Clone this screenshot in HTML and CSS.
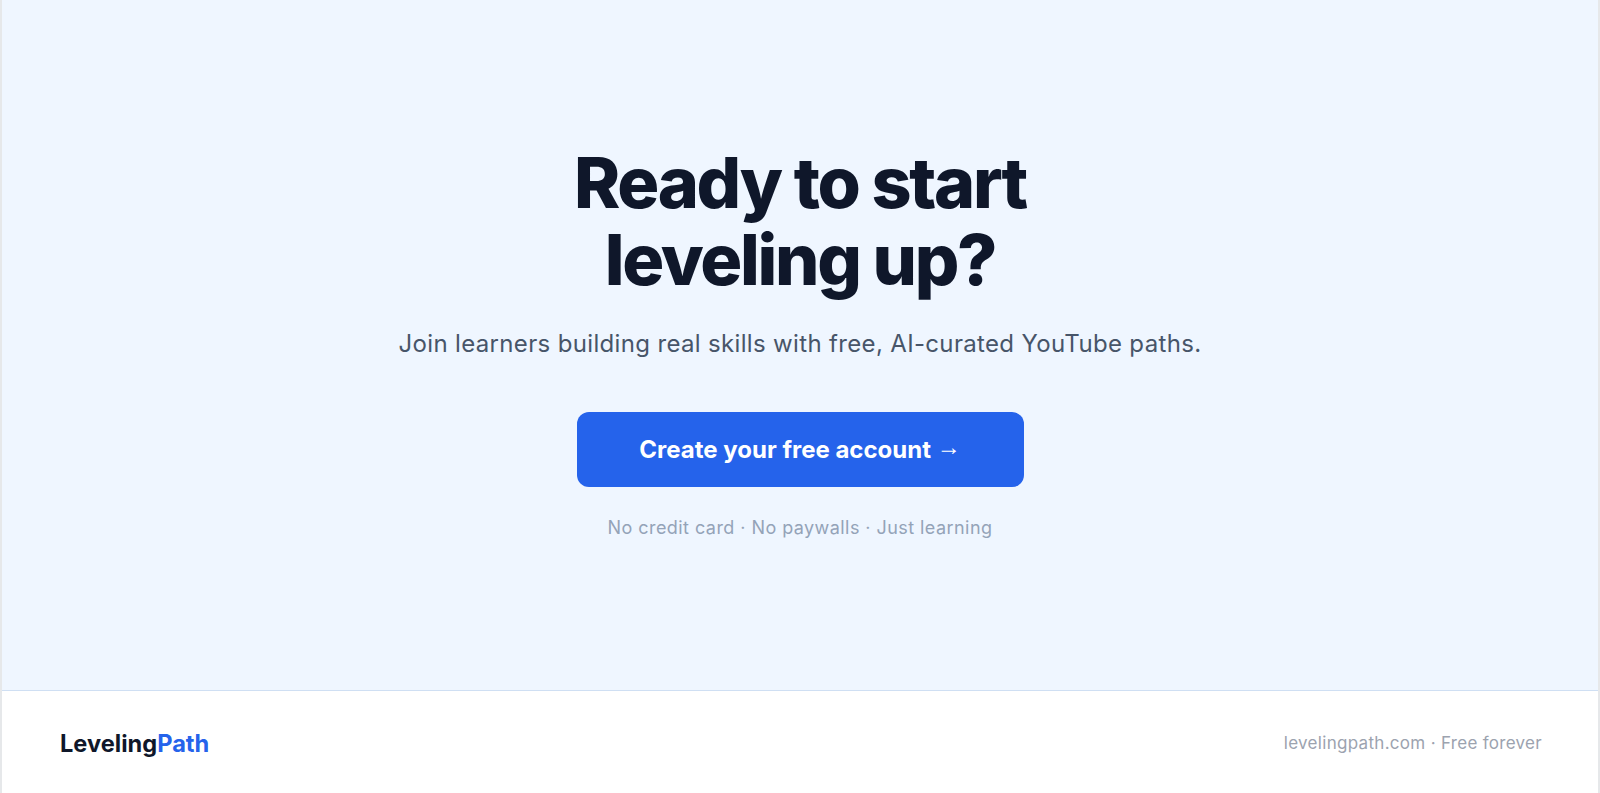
FILE: index.html
```html
<!DOCTYPE html>
<html lang="en">
<head>
    <meta charset="UTF-8">
    <meta name="viewport" content="width=device-width, initial-scale=1.0">
    <title>LevelingPath - Get started</title>
    <link rel="stylesheet" href="styles.css">
</head>
<body>
    <section class="cta">
        <h1 class="cta-title">Ready to start<br>leveling up?</h1>
        <p class="cta-text">Join learners building real skills with free, AI-curated YouTube paths.</p>
        <a href="#" class="cta-btn">Create your free account&nbsp;<span class="arrow">&rarr;</span></a>
        <p class="cta-note">No credit card · No paywalls · Just learning</p>
    </section>

    <footer class="footer">
        <div class="logo">Leveling<span>Path</span></div>
        <div class="footer-meta">levelingpath.com · Free forever</div>
    </footer>
</body>
</html>
```

FILE: styles.css
```css
* {
    box-sizing: border-box;
}
body {
    font-family: Inter, "Noto Sans", Arial, sans-serif;
    margin: 0;
    padding: 0;
    background: #fff;
    border-left: 2px solid #e6e8ea;
    border-right: 2px solid #e6e8ea;
    min-height: 100vh;
}
.cta {
    background: #eff6ff;
    height: 690px;
    display: flex;
    flex-direction: column;
    align-items: center;
    padding-top: 144px;
    text-align: center;
}
.cta-title {
    margin: 0;
    font-size: 70px;
    line-height: 77px;
    font-weight: 800;
    letter-spacing: -0.033em;
    color: #0f172a;
}
.cta-text {
    margin: 29px 0 0;
    font-size: 24px;
    line-height: 33px;
    letter-spacing: 0.34px;
    color: #475569;
}
.cta-btn {
    margin-top: 52px;
    display: flex;
    align-items: center;
    justify-content: center;
    width: 447px;
    height: 75px;
    border-radius: 12px;
    background: #2563eb;
    color: #fff;
    font-size: 24px;
    font-weight: 700;
    text-decoration: none;
}
.cta-btn .arrow {
    font-family: "Liberation Sans", Arial, sans-serif;
    font-weight: 700;
    margin-bottom: 5px;
}
.cta-note {
    margin: 29px 0 0;
    font-size: 18px;
    line-height: 24px;
    letter-spacing: 0.44px;
    color: #94a3b8;
}
.footer {
    border-top: 1px solid #cfdff3;
    height: 103px;
    display: flex;
    align-items: center;
    justify-content: space-between;
    padding: 2px 56px 0 58px;
}
.logo {
    font-size: 23.6px;
    font-weight: 700;
    color: #0f172a;
}
.logo span {
    color: #2563eb;
}
.footer-meta {
    font-size: 17px;
    letter-spacing: 0.3px;
    color: #9ca3af;
}
```
